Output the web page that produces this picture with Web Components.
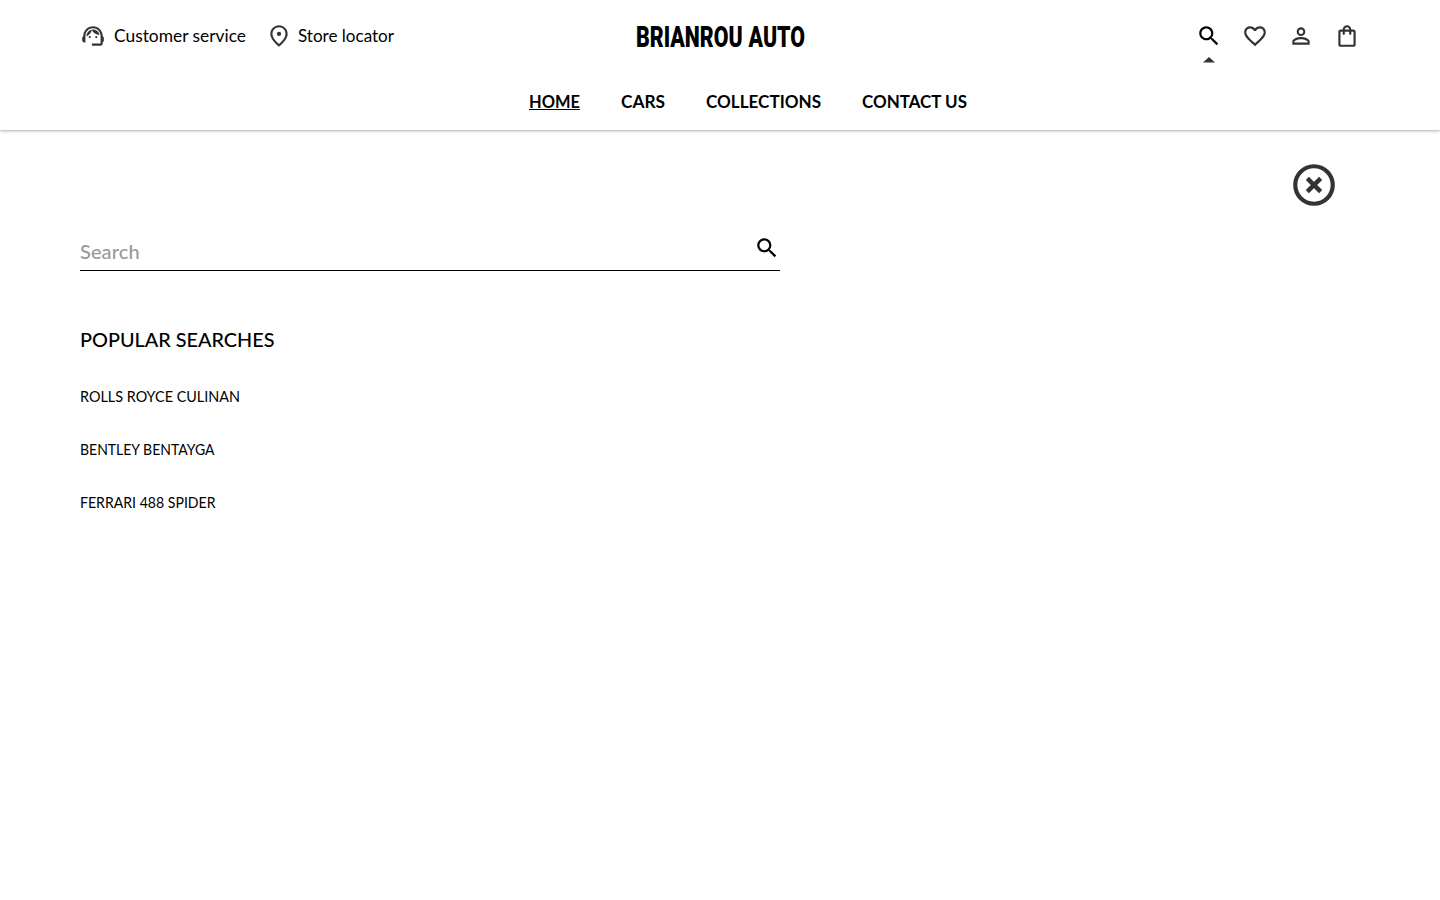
<!DOCTYPE html>
<html lang="en">
<head>
<meta charset="utf-8">
<title>BRIANROU AUTO</title>
<style>
body{margin:0;background:#fff;color:#000;font-family:Lato,"Liberation Sans",sans-serif}
</style>
</head>
<body>
<auto-shop></auto-shop>
<script>
const define = (name, html, setup) => {
  const t = document.createElement('template');
  t.innerHTML = html;
  customElements.define(name, class extends HTMLElement {
    constructor() {
      super();
      this.attachShadow({mode: 'open'}).append(t.content.cloneNode(true));
    }
    connectedCallback() { if (setup) setup(this, this.shadowRoot); }
  });
};

/* A single line of text set to a fixed measure */
define('fit-text', `<style>
  :host{display:block;white-space:nowrap;flex:none}
  span{display:inline-block;transform-origin:0 50%}
</style><span><slot></slot></span>`, (el, root) => {
  const w = +el.getAttribute('w'), s = root.querySelector('span');
  el.style.width = w + 'px';
  s.style.transform = `scaleX(${w / s.getBoundingClientRect().width})`;
});

const icons = {
  agent: '<path d="M21 12.22C21 6.73 16.74 3 12 3c-4.69 0-9 3.65-9 9.28-.6.34-1 .98-1 1.72v2c0 1.1.9 2 2 2h1v-6.1c0-3.87 3.13-7 7-7s7 3.13 7 7V19h-8v2h8c1.1 0 2-.9 2-2v-1.22c.59-.31 1-.92 1-1.64v-2.3c0-.7-.41-1.31-1-1.62z"/><circle cx="9" cy="13" r="1"/><circle cx="15" cy="13" r="1"/><path d="M18 11.03C17.52 8.18 15.04 6 12.05 6c-3.03 0-6.29 2.51-6.03 6.45 2.47-1.01 4.33-3.21 4.86-5.89 1.31 2.63 4 4.44 7.12 4.47z"/>',
  pin: '<path d="M12 2c-4.2 0-8 3.22-8 8.2 0 3.32 2.67 7.25 8 11.8 5.33-4.55 8-8.48 8-11.8C20 5.22 16.2 2 12 2zm0 17.34c-4-3.35-6-6.57-6-9.14C6 6.57 8.65 4 12 4s6 2.57 6 6.2c0 2.57-2 5.79-6 9.14z"/><circle cx="12" cy="10" r="2"/>',
  search: '<path d="M15.5 14h-.79l-.28-.27C15.41 12.59 16 11.11 16 9.5 16 5.91 13.09 3 9.5 3S3 5.91 3 9.5 5.91 16 9.5 16c1.61 0 3.09-.59 4.23-1.57l.27.28v.79l5 4.99L20.49 19l-4.99-5zm-6 0C7.01 14 5 11.99 5 9.5S7.01 5 9.5 5 14 7.01 14 9.5 11.99 14 9.5 14z"/>',
  heart: '<path d="M16.5 3c-1.74 0-3.41.81-4.5 2.09C10.91 3.81 9.24 3 7.5 3 4.42 3 2 5.42 2 8.5c0 3.78 3.4 6.86 8.55 11.54L12 21.35l1.45-1.32C18.6 15.36 22 12.28 22 8.5 22 5.42 19.58 3 16.5 3zm-4.4 15.55l-.1.1-.1-.1C7.14 14.24 4 11.39 4 8.5 4 6.5 5.5 5 7.5 5c1.54 0 3.04.99 3.57 2.36h1.87C13.46 5.99 14.96 5 16.5 5c2 0 3.5 1.5 3.5 3.5 0 2.89-3.14 5.74-7.9 10.05z"/>',
  person: '<path d="M12 5.9a2.1 2.1 0 1 1 0 4.2 2.1 2.1 0 0 1 0-4.2m0 9c2.97 0 6.1 1.46 6.1 2.1v1.1H5.9V17c0-.64 3.13-2.1 6.1-2.1M12 4C9.79 4 8 5.79 8 8s1.79 4 4 4 4-1.79 4-4-1.79-4-4-4zm0 9c-2.67 0-8 1.34-8 4v3h16v-3c0-2.66-5.33-4-8-4z"/>',
  bag: '<path d="M18 6h-2c0-2.21-1.79-4-4-4S8 3.79 8 6H6c-1.1 0-2 .9-2 2v12c0 1.1.9 2 2 2h12c1.1 0 2-.9 2-2V8c0-1.1-.9-2-2-2zm-6-2c1.1 0 2 .9 2 2h-4c0-1.1.9-2 2-2zm6 16H6V8h2v2c0 .55.45 1 1 1s1-.45 1-1V8h4v2c0 .55.45 1 1 1s1-.45 1-1V8h2v12z"/>',
  close: '<circle cx="12" cy="12" r="9" fill="none" stroke="currentColor" stroke-width="2"/><path d="M8.8 8.8l6.4 6.4M15.2 8.8l-6.4 6.4" fill="none" stroke="currentColor" stroke-width="2.1"/>'
};
define('svg-icon', `<style>
  :host{display:block;width:26px;height:26px;color:#333;flex:none}
  svg{display:block;width:100%;height:100%;fill:currentColor}
</style><svg viewBox="0 0 24 24" aria-hidden="true"></svg>`, (el, root) => {
  root.querySelector('svg').innerHTML = icons[el.getAttribute('name')];
});

define('site-header', `<style>
  :host{display:block;box-sizing:border-box;height:130px;background:#fff;box-shadow:0 1px 3px rgba(0,0,0,.32)}
  .top{display:grid;grid-template-columns:1fr auto 1fr;align-items:center;height:72px;padding:0 80px}
  .help,.link,.tools,nav{display:flex;align-items:center}
  .help{gap:20px;font-size:18px;line-height:26px}
  .link{gap:8px}
  .link + .link{gap:6px}
  .link fit-text{padding-bottom:2px;line-height:24px}
  .logo{font:900 29px/36px Roboto,sans-serif;padding-top:1px;word-spacing:1px}
  .tools{justify-content:flex-end;gap:20px}
  .find{position:relative}
  .find svg-icon{color:#000}
  .find::after{content:"";position:absolute;left:7px;top:34px;width:12px;height:5.5px;background:#333;clip-path:polygon(50% 0,100% 100%,0 100%)}
  nav{justify-content:center;gap:41px;padding:15px 0 0 56px;font-weight:700;font-size:16.5px;line-height:30px}
  .on{text-decoration:underline;text-decoration-thickness:1px;text-underline-offset:1px}
</style>
<div class="top">
  <div class="help">
    <div class="link"><svg-icon name="agent"></svg-icon><fit-text w="132">Customer service</fit-text></div>
    <div class="link"><svg-icon name="pin"></svg-icon><fit-text w="96">Store locator</fit-text></div>
  </div>
  <fit-text class="logo" w="169">BRIANROU AUTO</fit-text>
  <div class="tools">
    <div class="find"><svg-icon name="search"></svg-icon></div>
    <svg-icon name="heart"></svg-icon><svg-icon name="person"></svg-icon><svg-icon name="bag"></svg-icon>
  </div>
</div>
<nav>
  <fit-text w="51"><span class="on">HOME</span></fit-text>
  <fit-text w="44">CARS</fit-text>
  <fit-text w="115">COLLECTIONS</fit-text>
  <fit-text w="105">CONTACT US</fit-text>
</nav>`);

define('search-panel', `<style>
  :host{display:block;padding:30px 80px 0}
  .bar{display:flex;justify-content:flex-end;padding-right:21px}
  .bar svg-icon{width:50px;height:50px}
  .field{display:flex;align-items:flex-start;box-sizing:border-box;width:700px;height:49px;margin-top:12px;border-bottom:1px solid #000}
  input{flex:1;min-width:0;border:0;outline:0;padding:0;margin:12px 0 0;height:34px;background:none;font:500 20px/34px Lato,sans-serif;letter-spacing:.1px;color:#000}
  input::placeholder{color:#999;opacity:1}
  .field svg-icon{color:#000;margin-top:13px}
  h2{margin:53px 0 0;font-weight:500;font-size:20px;line-height:30px}
  ul{list-style:none;margin:31px 0 0;padding:0;display:flex;flex-direction:column;gap:29px;font-size:14.5px;line-height:24px}
</style>
<div class="bar"><svg-icon name="close"></svg-icon></div>
<div class="field"><input type="text" placeholder="Search" aria-label="Search"><svg-icon name="search"></svg-icon></div>
<h2><fit-text w="194.5">POPULAR SEARCHES</fit-text></h2>
<ul>
  <li><fit-text w="160">ROLLS ROYCE CULINAN</fit-text></li>
  <li><fit-text w="134.5">BENTLEY BENTAYGA</fit-text></li>
  <li><fit-text w="135.5">FERRARI 488 SPIDER</fit-text></li>
</ul>`);

define('auto-shop', `<style>:host{display:block;min-height:900px}</style>
<site-header></site-header><search-panel></search-panel>`);
</script>
</body>
</html>
